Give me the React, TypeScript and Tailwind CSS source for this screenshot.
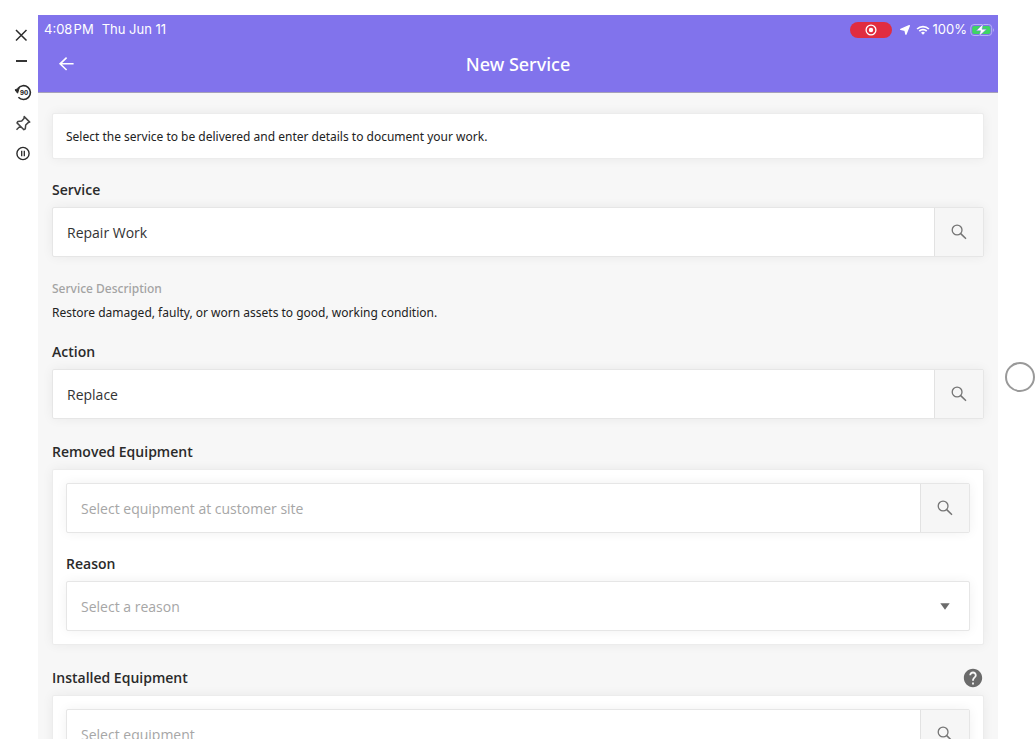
import { useState, type ReactNode } from 'react';

const fieldShadow = 'shadow-[0_0_12px_rgba(0,0,0,0.06)]';

const SearchIcon = () => (
    <svg viewBox="0 0 16 16" className="h-4 w-4" fill="none" stroke="#757575" strokeWidth="1.3" aria-hidden="true">
        <circle cx="6.1" cy="6" r="4.9" />
        <path d="M9.700 9.600 15 14.800" strokeWidth="1.500" />
    </svg>
);

const ToolButton = ({ label, children }: { label: string; children: ReactNode }) => (
    <button type="button" aria-label={label} className="h-5 w-6">
        <svg viewBox="0 0 24 20" className="h-5 w-6" fill="none" stroke="#2b2b2b" strokeWidth="1.5">
            {children}
        </svg>
    </button>
);

const FieldLabel = ({ id, children }: { id: string; children: ReactNode }) => (
    <label htmlFor={id} className="mb-1.5 block font-['Open_Sans',sans-serif] text-sm leading-[22px] font-semibold text-[#2a2a2a]">
        {children}
    </label>
);

interface LookupProps {
    id: string;
    value?: string;
    placeholder?: string;
}

const Lookup = ({ id, value = '', placeholder }: LookupProps) => {
    const [text, setText] = useState(value);

    return (
        <div className={`flex h-[50px] rounded-xs border border-[#e6e6e6] bg-white ${fieldShadow}`}>
            <input
                id={id}
                type="text"
                value={text}
                placeholder={placeholder}
                onChange={(e) => setText(e.target.value)}
                className="min-w-0 flex-1 px-3.5 pt-0.5 font-['Open_Sans',sans-serif] text-sm text-[#333] outline-none placeholder:text-[#a6a6a6]"
            />
            <button
                type="button"
                aria-label="Search"
                className="flex w-[49px] items-center justify-center border-l border-[#e2e2e2] bg-[#f6f6f6]"
            >
                <SearchIcon />
            </button>
        </div>
    );
};

const Toolbar = () => (
    <aside className="flex w-[38px] shrink-0 flex-col pt-[10px] pl-[11px]">
        <ToolButton label="Close">
            <path d="M5 5 15.500 15.500M15.500 5 5 15.500" />
        </ToolButton>
        <div className="mt-1.5 flex flex-col gap-[11px]">
            <ToolButton label="Minimize">
                <path d="M5 10h11" strokeWidth="1.9" />
            </ToolButton>
            <ToolButton label="Rotate 90 degrees">
                <path d="M7 6.400A6.900 6.900 0 1 1 7.400 15.200" strokeWidth="1.6" />
                <path d="M4 7.900 8.200 6 6.600 11.200Z" fill="#2b2b2b" strokeWidth="1" />
                <text x="13" y="12.500" textAnchor="middle" fontSize="6" fontWeight="800" fill="#2b2b2b" stroke="none" fontFamily="Inter, sans-serif">
                    90
                </text>
            </ToolButton>
            <ToolButton label="Pin">
                <path
                    d="M13.200 3.600 18.700 9.100 17.200 9.600 14.700 12 14.300 15.800 12.900 16.700 6 9.900 6.900 8.500 10.700 8 13 5.400ZM9.300 13 5.500 16.700"
                    stroke="#444"
                    strokeLinejoin="round"
                />
            </ToolButton>
            <ToolButton label="Pause">
                <circle cx="12" cy="9.500" r="6.100" strokeWidth="1.4" />
                <path d="M10.700 6.800v5.400M13.300 6.800v5.400" strokeWidth="1.3" />
            </ToolButton>
        </div>
    </aside>
);

const StatusBar = () => (
    <div className="flex h-[29px] items-center justify-between pr-[3px] pl-1.5 font-[Inter,sans-serif] text-[13px]">
        <div className="flex gap-2">
            <span>4:08{'\u200A'}PM</span>
            <span>Thu Jun 11</span>
        </div>
        <div className="flex items-center">
            <span className="mr-2 flex h-4 w-[42px] items-center justify-center rounded-full bg-[#e02c40]">
                <svg viewBox="0 0 12 12" className="h-3 w-3" aria-hidden="true">
                    <circle cx="6" cy="6" r="4.900" fill="none" stroke="#fff" strokeWidth="1.300" />
                    <circle cx="6" cy="6" r="2.200" fill="#fff" />
                </svg>
            </span>
            <svg viewBox="0 0 10 10" className="mr-1.5 h-2.5 w-2.5" fill="#fff" aria-hidden="true">
                <path d="M9.300.700 5.900 9.200 5 5.200 .800 4.400Z" stroke="#fff" strokeWidth="1.400" strokeLinejoin="round" />
            </svg>
            <svg viewBox="0 0 14 10" className="mr-[3px] h-2.5 w-3.5" fill="none" stroke="#fff" strokeWidth="1.700" aria-hidden="true">
                <path d="M1.100 4A8.400 8.400 0 0 1 12.900 4M3.300 6.200A5.200 5.200 0 0 1 10.700 6.200" />
                <path d="M7 9.700 5 7.700A2.900 2.900 0 0 1 9 7.700Z" fill="#fff" stroke="none" />
            </svg>
            <span>100%</span>
            <svg viewBox="0 0 25 14" className="ml-[3px] h-3.5 w-[25px]" aria-hidden="true">
                <rect x=".800" y="1.500" width="20.900" height="11" rx="3.200" fill="none" stroke="#b9b2f5" strokeWidth="1" />
                <rect x="2.200" y="2.900" width="18.100" height="8.200" rx="2" fill="#3fd663" />
                <path d="M23 5.200v3.600c1.200-.5 1.200-3.100 0-3.600" fill="#b9b2f5" />
                <path d="M13.200.900 6.300 7.700h4.300L9.200 13.100 16.500 6.200H12Z" fill="#fff" stroke="#8173ec" strokeWidth=".5" />
            </svg>
        </div>
    </div>
);

export default function App() {
    const [reason, setReason] = useState('');

    return (
        <div className="flex h-screen bg-white py-[15px] font-['Noto_Sans',sans-serif]">
            <Toolbar />

            <div className="flex min-w-0 flex-1 flex-col bg-[#f7f7f7]">
                <header className="border-b border-[#a5a1b8] bg-[#8173ec] text-white">
                    <StatusBar />
                    <div className="grid h-12 grid-cols-[40px_1fr_40px] items-start px-2">
                        <button type="button" aria-label="Back" className="flex h-10 w-10 items-center justify-center">
                            <svg viewBox="0 0 16 16" className="h-4 w-4" fill="none" stroke="#fff" strokeWidth="1.600">
                                <path d="M15.600 7.800H2.200M8.600 1.600 2.100 7.800 8.600 14" />
                            </svg>
                        </button>
                        <h1 className="text-center text-lg leading-10 font-medium">New Service</h1>
                    </div>
                </header>

                <main className="min-h-0 flex-1 overflow-hidden px-3.5 pt-5">
                    <p className={`rounded-xs border border-[#ececec] bg-white px-[13px] pt-3 pb-2.5 text-xs leading-[22px] text-[#222] ${fieldShadow}`}>
                        Select the service to be delivered and enter details to document your work.
                    </p>

                    <div className="mt-5">
                        <FieldLabel id="service">Service</FieldLabel>
                        <Lookup id="service" value="Repair Work" />
                    </div>

                    <dl className="mt-5 text-xs leading-6">
                        <dt className="font-medium text-[#a3a3a3]">Service Description</dt>
                        <dd className="text-[#222]">Restore damaged, faulty, or worn assets to good, working condition.</dd>
                    </dl>

                    <div className="mt-4">
                        <FieldLabel id="action">Action</FieldLabel>
                        <Lookup id="action" value="Replace" />
                    </div>

                    {/* Removed Equipment */}
                    <section className="mt-[22px]">
                        <FieldLabel id="removed">Removed Equipment</FieldLabel>
                        <div className={`rounded-xs border border-[#ececec] bg-white p-[13px] ${fieldShadow}`}>
                            <Lookup id="removed" placeholder="Select equipment at customer site" />
                            <div className="mt-5">
                                <FieldLabel id="reason">Reason</FieldLabel>
                                <div className="relative">
                                    <select
                                        id="reason"
                                        value={reason}
                                        onChange={(e) => setReason(e.target.value)}
                                        className={`h-[50px] w-full appearance-none rounded-xs border border-[#e6e6e6] bg-white px-3.5 pt-0.5 font-['Open_Sans',sans-serif] text-sm text-[#a6a6a6] outline-none ${fieldShadow}`}
                                    >
                                        <option value="">Select a reason</option>
                                    </select>
                                    <svg viewBox="0 0 10 7" className="pointer-events-none absolute top-[22px] right-5 h-[7px] w-2.5" fill="#6b6b6b" aria-hidden="true">
                                        <path d="M.300.300h9.400L5 6.800Z" />
                                    </svg>
                                </div>
                            </div>
                        </div>
                    </section>

                    {/* Installed Equipment */}
                    <section className="mt-[22px]">
                        <div className="flex items-start justify-between">
                            <FieldLabel id="installed">Installed Equipment</FieldLabel>
                            <button type="button" aria-label="Help" className="flex h-[22px] w-[22px] items-center justify-center">
                                <svg viewBox="0 0 24 24" className="h-[22px] w-[22px]" fill="#6b6b6b">
                                    <path d="M12 2C6.480 2 2 6.480 2 12s4.480 10 10 10 10-4.480 10-10S17.520 2 12 2zm1 17h-2v-2h2v2zm2.070-7.750-.9.920C13.450 12.900 13 13.500 13 15h-2v-.5c0-1.100.450-2.100 1.170-2.830l1.240-1.260c.370-.360.590-.860.590-1.410 0-1.100-.9-2-2-2s-2 .9-2 2H8c0-2.210 1.790-4 4-4s4 1.790 4 4c0 .880-.360 1.680-.930 2.250z" />
                                </svg>
                            </button>
                        </div>
                        <div className={`rounded-xs border border-[#ececec] bg-white p-[13px] ${fieldShadow}`}>
                            <Lookup id="installed" placeholder="Select equipment" />
                        </div>
                    </section>
                </main>
            </div>

            <aside className="flex w-[37px] shrink-0 items-center justify-end">
                <button type="button" aria-label="Home" className="h-[30px] w-[30px] rounded-full border-2 border-[#999]" />
            </aside>
        </div>
    );
}
